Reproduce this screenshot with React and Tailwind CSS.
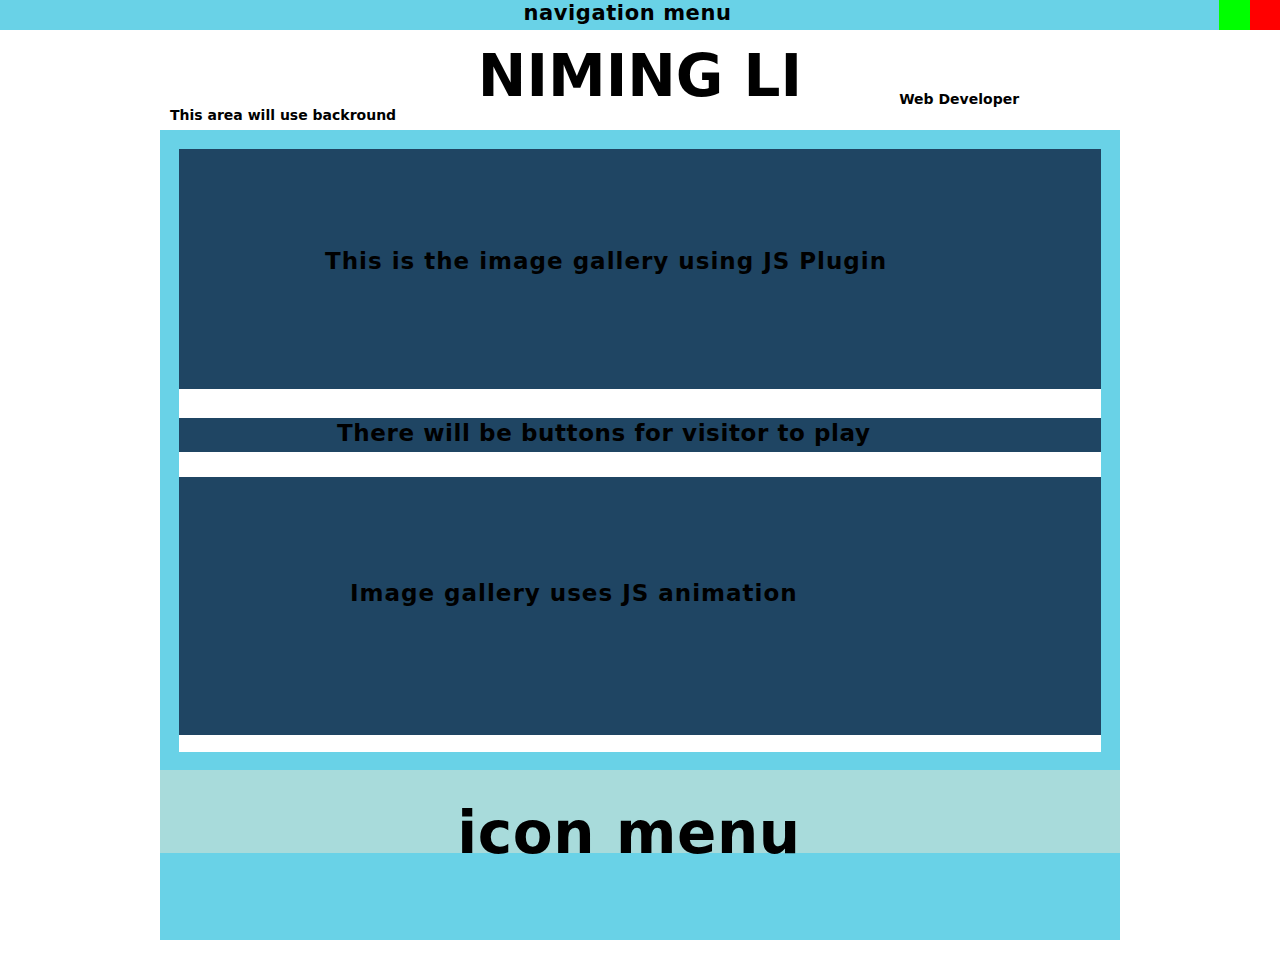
// # Portfolio wireframe page #
const font = { fontFamily: '"DejaVu Sans", "Liberation Sans", sans-serif' };

const App = () => {
    return (
        <div className="min-h-[960px] bg-white text-black font-bold" style={font}>

            {/* # Navigation bar # */}
            <nav className="flex h-[30px] bg-[#69d2e7]">
                <div className="flex-1 pl-[36px] text-center text-[21px] leading-[26px] tracking-[0.6px]">
                    navigation menu
                </div>
                <div className="w-[31px] h-[30px] bg-[#00ff00]" />
                <div className="w-[30px] h-[30px] bg-[#ff0000]" />
            </nav>

            <div className="w-[960px] mx-auto">

                {/* # Header # */}
                <header className="h-[100px] pt-[17px]">
                    <div className="grid grid-cols-[minmax(0,1fr)_auto_minmax(0,1fr)]">
                        <div />
                        <h1 className="text-[58px] leading-[58px]">NIMING LI</h1>
                        <div className="pl-[97px] pt-[44px] text-[14px] leading-[16px]">
                            Web Developer
                        </div>
                    </div>
                    <p className="pl-[10px] text-[14px] leading-[16px]">
                        This area will use backround
                    </p>
                </header>

                {/* # Gallery area # */}
                <section className="bg-[#69d2e7] p-[19px] pb-[18px]">
                    <div className="bg-white">
                        <div className="h-[240px] bg-[#1f4563] pl-[146px] pt-[100px] text-[23px] leading-[25px] tracking-[1px]">
                            This is the image gallery using JS Plugin
                        </div>
                        <div className="h-[29px]" />
                        <div className="h-[34px] bg-[#1f4563] pl-[158px] pt-[3px] text-[23px] leading-[25px] tracking-[0.6px]">
                            There will be buttons for visitor to play
                        </div>
                        <div className="h-[25px]" />
                        <div className="h-[258px] bg-[#1f4563] pl-[171px] pt-[104px] text-[23px] leading-[25px] tracking-[1px]">
                            Image gallery uses JS animation
                        </div>
                        <div className="h-[17px]" />
                    </div>
                </section>

                {/* # Icon menu # */}
                <div className="h-[83px] bg-[#a8dbdb] pt-[34px] pr-[22px] text-center text-[58px] leading-[58px] tracking-[0.6px]">
                    icon menu
                </div>
                <div className="h-[87px] bg-[#69d2e7]" />
            </div>
        </div>
    );
};

export default App;
